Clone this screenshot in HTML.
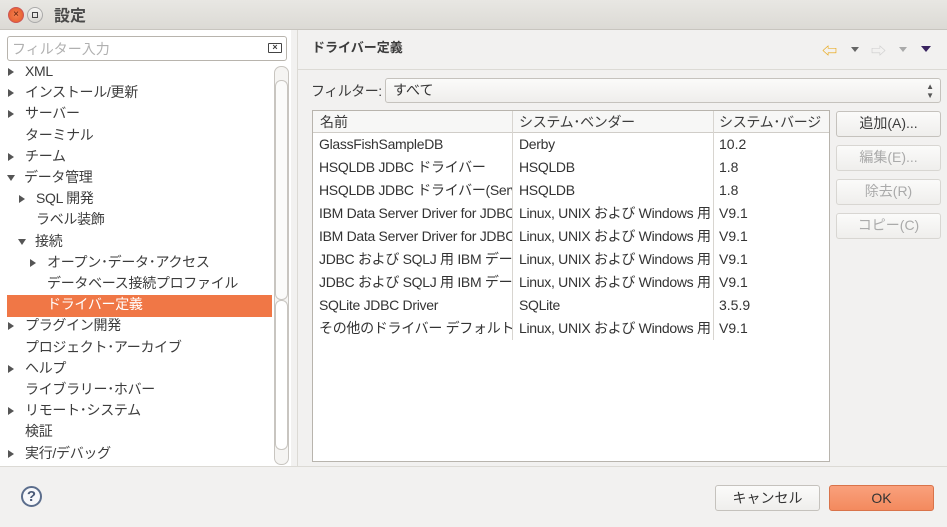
<!DOCTYPE html>
<html><head><meta charset="utf-8"><style>
*{margin:0;padding:0;box-sizing:border-box}
body{width:947px;height:527px;overflow:hidden;background:#f2f1f0;font-family:"Liberation Sans","Noto Sans CJK JP",sans-serif;font-size:14px;color:#3c3c3c;position:relative}
.a{position:absolute;white-space:nowrap}
.tb{left:0;top:0;width:947px;height:30px;background:linear-gradient(#e8e7e3,#dcdad5);border-bottom:1px solid #c8c5bf}
.left{left:0;top:30px;width:291px;height:436px;background:#fff}
.tri{display:inline-block;width:0;height:0;border-left:6px solid #555;border-top:4px solid transparent;border-bottom:4px solid transparent}
.trd{display:inline-block;width:0;height:0;border-top:6px solid #555;border-left:4px solid transparent;border-right:4px solid transparent}
.btn{background:linear-gradient(#fbfbfa,#efeeec);border:1px solid #c5c2bd;border-radius:3px;text-align:center;line-height:23px;font-size:14px}
.dis{color:#aaa;border-color:#d8d6d2}
.tree{letter-spacing:-0.3px}
</style></head><body>
<div class="a tb"></div>
<div class="a" style="left:8px;top:7px;width:16px;height:16px;border-radius:50%;background:radial-gradient(#f48050,#e2582a);border:1px solid #c55;color:#5a1d0a;font-size:10px;line-height:14px;text-align:center">×</div>
<div class="a" style="left:27px;top:7px;width:16px;height:16px;border-radius:50%;background:linear-gradient(#f6f5f3,#d8d6d1);border:1px solid #aaa"><div style="margin:4px;width:6px;height:6px;border:1px solid #444"></div></div>
<div class="a" style="left:54px;top:2px;font-size:16px;font-weight:bold;color:#4a4a4a">設定</div>

<div class="a left"></div>
<div class="a" style="left:7px;top:36px;width:280px;height:25px;border:1px solid #b8b4ad;border-radius:3px;background:#fff"></div>
<div class="a" style="left:12px;top:39px;color:#b0b0b0">フィルター入力</div>
<div class="a" style="left:268px;top:43px;width:14px;height:10px;border:1.5px solid #444;border-radius:1px;font-size:9px;line-height:7px;text-align:center;font-weight:bold">×</div>
<div class="a" style="left:274px;top:66px;width:15px;height:399px;border:1px solid #c8c5c0;border-radius:7px;background:#f5f4f2"></div>
<div class="a" style="left:275px;top:80px;width:13px;height:220px;border:1px solid #c8c5c0;border-radius:6px;background:#fbfbfa"></div>
<div class="a" style="left:275px;top:300px;width:13px;height:150px;border:1px solid #c8c5c0;border-radius:6px;background:#fff"></div>
<div class="a" style="left:7px;top:295px;width:265px;height:22px;background:#f07746"></div>

<div class="a tree" style="left:0;top:61px;line-height:21.2px">
<div><span class="tri" style="margin:0 11px 0 8px"></span>XML</div>
<div><span class="tri" style="margin:0 11px 0 8px"></span>インストール/更新</div>
<div><span class="tri" style="margin:0 11px 0 8px"></span>サーバー</div>
<div style="padding-left:25px">ターミナル</div>
<div><span class="tri" style="margin:0 11px 0 8px"></span>チーム</div>
<div><span class="trd" style="margin:0 9px 1px 7px"></span>データ管理</div>
<div><span class="tri" style="margin:0 11px 0 19px"></span>SQL 開発</div>
<div style="padding-left:36px">ラベル装飾</div>
<div><span class="trd" style="margin:0 9px 1px 18px"></span>接続</div>
<div><span class="tri" style="margin:0 11px 0 30px"></span>オープン･データ･アクセス</div>
<div style="padding-left:47px">データベース接続プロファイル</div>
<div style="padding-left:47px;color:#fff">ドライバー定義</div>
<div><span class="tri" style="margin:0 11px 0 8px"></span>プラグイン開発</div>
<div style="padding-left:25px">プロジェクト･アーカイブ</div>
<div><span class="tri" style="margin:0 11px 0 8px"></span>ヘルプ</div>
<div style="padding-left:25px">ライブラリー･ホバー</div>
<div><span class="tri" style="margin:0 11px 0 8px"></span>リモート･システム</div>
<div style="padding-left:25px">検証</div>
<div><span class="tri" style="margin:0 11px 0 8px"></span>実行/デバッグ</div>
</div>

<div class="a" style="left:297px;top:30px;width:1px;height:436px;background:#dcdad5"></div>
<div class="a" style="left:298px;top:69px;width:649px;height:1px;background:#dcdad5"></div>
<div class="a" style="left:312px;top:37px;font-size:13px;font-weight:bold;color:#3c3c3c">ドライバー定義</div>
<div class="a" style="left:822px;top:40px;color:#e8a000;font-size:15px">⇦</div>
<div class="a" style="left:851px;top:47px;border-top:5px solid #666;border-left:4px solid transparent;border-right:4px solid transparent"></div>
<div class="a" style="left:871px;top:40px;color:#ccc;font-size:15px">⇨</div>
<div class="a" style="left:899px;top:47px;border-top:5px solid #aaa;border-left:4px solid transparent;border-right:4px solid transparent"></div>
<div class="a" style="left:921px;top:46px;border-top:6px solid #3a2460;border-left:5px solid transparent;border-right:5px solid transparent"></div>

<div class="a" style="left:311px;top:81px;letter-spacing:-0.5px">フィルター:</div>
<div class="a btn" style="left:385px;top:78px;width:556px;height:25px;text-align:left;padding-left:7px;color:#333">すべて<span style="position:absolute;right:6px;top:0;font-size:8px;line-height:9px;color:#555;padding-top:3px">▲<br>▼</span></div>

<div class="a" style="left:312px;top:110px;width:518px;height:352px;background:#fff;border:1px solid #b8b4ad"></div>
<div class="a" style="left:313px;top:111px;width:516px;height:22px;background:#f7f7f6;border-bottom:1px solid #d0cdc8"></div>
<div class="a" style="left:512px;top:111px;width:1px;height:229px;background:#d8d5d0"></div>
<div class="a" style="left:713px;top:111px;width:1px;height:229px;background:#d8d5d0"></div>
<div class="a" style="left:320px;top:112px;line-height:20px">名前</div>
<div class="a" style="left:519px;top:112px;line-height:20px;letter-spacing:-0.3px">システム･ベンダー</div>
<div class="a" style="left:719px;top:112px;line-height:20px;width:110px;overflow:hidden;letter-spacing:-0.3px">システム･バージ</div>
<div class="a" style="left:319px;top:133px;width:193px;overflow:hidden;line-height:23px;color:#333;letter-spacing:-0.3px">
<div>GlassFishSampleDB</div><div>HSQLDB JDBC ドライバー</div><div>HSQLDB JDBC ドライバー(Server)</div><div>IBM Data Server Driver for JDBC</div><div>IBM Data Server Driver for JDBC</div><div>JDBC および SQLJ 用 IBM データ</div><div>JDBC および SQLJ 用 IBM データ</div><div>SQLite JDBC Driver</div><div>その他のドライバー デフォルト</div></div>
<div class="a" style="left:519px;top:133px;width:194px;overflow:hidden;line-height:23px;color:#333;letter-spacing:-0.3px">
<div>Derby</div><div>HSQLDB</div><div>HSQLDB</div><div>Linux, UNIX および Windows 用</div><div>Linux, UNIX および Windows 用</div><div>Linux, UNIX および Windows 用</div><div>Linux, UNIX および Windows 用</div><div>SQLite</div><div>Linux, UNIX および Windows 用</div></div>
<div class="a" style="left:719px;top:133px;line-height:23px;color:#333">
<div>10.2</div><div>1.8</div><div>1.8</div><div>V9.1</div><div>V9.1</div><div>V9.1</div><div>V9.1</div><div>3.5.9</div><div>V9.1</div></div>

<div class="a btn" style="left:836px;top:111px;width:105px;height:26px">追加(A)...</div>
<div class="a btn dis" style="left:836px;top:145px;width:105px;height:26px">編集(E)...</div>
<div class="a btn dis" style="left:836px;top:179px;width:105px;height:26px">除去(R)</div>
<div class="a btn dis" style="left:836px;top:213px;width:105px;height:26px">コピー(C)</div>

<div class="a" style="left:0;top:466px;width:947px;height:1px;background:#dcdad5"></div>
<div class="a" style="left:21px;top:486px;width:21px;height:21px;border:2px solid #5b6d8c;border-radius:50%;text-align:center;line-height:17px;font-weight:bold;color:#4a5a78;font-size:15px;background:#f7f8fb">?</div>
<div class="a btn" style="left:715px;top:485px;width:105px;height:26px;line-height:24px;color:#333">キャンセル</div>
<div class="a btn" style="left:829px;top:485px;width:105px;height:26px;line-height:24px;background:linear-gradient(#f9a07c,#f38a5e);border-color:#d9734a;color:#333">OK</div>
</body></html>
